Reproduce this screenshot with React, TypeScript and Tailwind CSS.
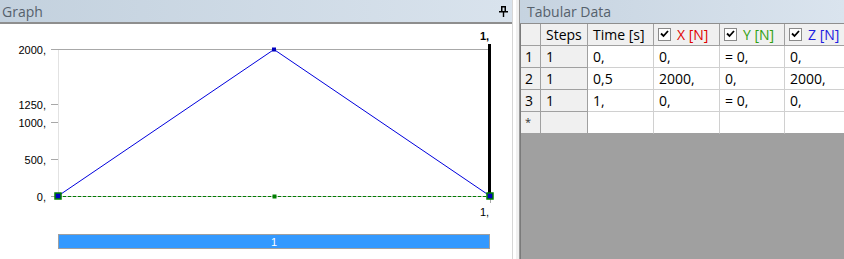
import React from "react";

const rows = [
  ["1", "1", "0,", "0,", "= 0,", "0,"],
  ["2", "1", "0,5", "2000,", "0,", "2000,"],
  ["3", "1", "1,", "0,", "= 0,", "0,"],
  ["*", "", "", "", "", ""],
];

const Pin = () => (
  <svg width="9" height="11" viewBox="0 0 9 11" className="block">
    <rect x="0" y="5" width="9" height="1.5" fill="#000" />
    <rect x="2" y="0" width="1.5" height="6" fill="#000" />
    <rect x="2" y="0" width="5" height="1.5" fill="#000" />
    <rect x="5.5" y="0" width="1.5" height="6" fill="#000" />
    <rect x="3.8" y="6" width="1.4" height="5" fill="#000" />
  </svg>
);

const Check = () => (
  <span className="inline-flex w-[13px] h-[13px] border border-[#8a8a8a] bg-white items-start justify-start pl-px pt-px mr-[6px] shrink-0">
    <svg width="9" height="8" viewBox="0 0 9 8">
      <path d="M1 3.5 L3.5 6 L8 1" stroke="#000" strokeWidth="1.8" fill="none" />
    </svg>
  </span>
);

const Chart = () => (
  <svg width="512" height="235" viewBox="0 24 512 235" className="block">
    <line x1="58.5" y1="49" x2="58.5" y2="196" stroke="#e2e2e2" />
    <line x1="51" y1="49.5" x2="490" y2="49.5" stroke="#a8a8a8" />
    {[104.5, 122.5, 159.5, 196.5].map((y) => (
      <line key={y} x1="51" y1={y} x2="58" y2={y} stroke="#a8a8a8" />
    ))}
    <g fontFamily="'Liberation Sans', Arial, sans-serif" fontSize="11" fill="#000" textAnchor="end">
      <text x="46" y="54">2000,</text>
      <text x="46" y="109">1250,</text>
      <text x="46" y="127">1000,</text>
      <text x="46" y="164">500,</text>
      <text x="46" y="201">0,</text>
    </g>
    <line x1="58" y1="196.5" x2="490" y2="196.5" stroke="#b8b8b8" />
    <line x1="58" y1="196.5" x2="490" y2="196.5" stroke="#008000" strokeDasharray="3 2" />
    <polyline points="58,196 274,49.5 490,196" fill="none" stroke="#0000dd" strokeWidth="1" />
    <line x1="490.5" y1="197" x2="490.5" y2="203" stroke="#a8a8a8" />
    <rect x="488" y="44" width="3" height="152" fill="#000" />
    <rect x="55" y="193" width="6" height="6" fill="#0000c0" stroke="#008000" strokeWidth="1.5" />
    <rect x="487" y="193" width="6" height="6" fill="#0000c0" stroke="#008000" strokeWidth="1.5" />
    <rect x="272.5" y="194.5" width="4" height="4" fill="#008000" />
    <rect x="272" y="47.5" width="4" height="4" fill="#0000c0" />
    <g fontFamily="'Liberation Sans', Arial, sans-serif" fontSize="11" fill="#000">
      <text x="480" y="40" fontWeight="bold">1,</text>
      <text x="480" y="216">1,</text>
    </g>
    <rect x="58.5" y="234.5" width="431" height="14" fill="#3399ff" stroke="#a0a0a0" />
    <text x="274" y="246" fontFamily="'Liberation Sans', Arial, sans-serif" fontSize="11" fill="#fff" textAnchor="middle">
      1
    </text>
  </svg>
);

export default function App() {
  const cols = "grid-cols-[20px_47px_66px_66px_65px_1fr]";
  return (
    <div className="w-[844px] h-[259px] flex bg-white overflow-hidden font-['Open_Sans',sans-serif] text-[14px] text-black">
      {/* Graph panel */}
      <div className="w-[512px] flex flex-col">
        <div className="h-[24px] flex items-center justify-between pl-[2px] pr-[4px] bg-linear-to-r from-[#c3d1de] to-[#d9e3ed] border-b-2 border-[#8e8e8e]">
          <span className="text-[14px] text-[#56616c]">Graph</span>
          <Pin />
        </div>
        <Chart />
      </div>
      {/* splitter */}
      <div className="w-[8px] flex">
        <div className="w-px bg-[#d6d6d6]" />
        <div className="w-[3px] bg-white" />
        <div className="w-[3px] bg-[#f0f0f0]" />
        <div className="w-px bg-[#9a9a9a]" />
      </div>
      {/* Tabular data panel */}
      <div className="flex-1 flex flex-col">
        <div className="h-[24px] flex items-center pl-[7px] bg-linear-to-r from-[#c6d3e0] to-[#dae4ee] border-b border-[#8e8e8e]">
          <span className="text-[14px] text-[#56616c]">Tabular Data</span>
        </div>
        <div className="flex-1 flex flex-col bg-[#a0a0a0] border-l border-[#7a7a7a]">
          <div className={`grid ${cols} bg-[#f0f0f0]`}>
            <div className="h-[22px] border-r border-b border-[#a0a0a0]" />
            <div className="h-[22px] border-r border-b border-[#a0a0a0] flex items-center pl-[5px]">Steps</div>
            <div className="h-[22px] border-r border-b border-[#a0a0a0] flex items-center pl-[5px]">Time [s]</div>
            <div className="h-[22px] border-r border-b border-[#a0a0a0] flex items-center pl-[4px] text-[#e00000]">
              <Check />X [N]
            </div>
            <div className="h-[22px] border-r border-b border-[#a0a0a0] flex items-center pl-[4px] text-[#30a010]">
              <Check />Y [N]
            </div>
            <div className="h-[22px] border-b border-[#a0a0a0] flex items-center pl-[4px] text-[#2020e0]">
              <Check />Z [N]
            </div>
          </div>
          {rows.map((r, i) => (
            <div key={i} className={`grid ${cols} bg-white`}>
              <div
                className={`h-[22px] bg-[#f0f0f0] border-r border-b border-[#a0a0a0] flex items-center pl-[4px] ${
                  r[0] === "*" ? "text-[11px] text-[#333]" : ""
                }`}
              >
                {r[0]}
              </div>
              <div className="h-[22px] bg-[#f0f0f0] border-r border-b border-[#a0a0a0] flex items-center pl-[5px]">{r[1]}</div>
              {r.slice(2).map((c, j) => (
                <div
                  key={j}
                  className={`h-[22px] border-b border-[#d0d0d0] flex items-center pl-[5px] ${
                    j < 3 ? "border-r" : ""
                  } ${i === rows.length - 1 ? "border-b-[#a0a0a0]" : ""}`}
                >
                  {c}
                </div>
              ))}
            </div>
          ))}
        </div>
      </div>
    </div>
  );
}
